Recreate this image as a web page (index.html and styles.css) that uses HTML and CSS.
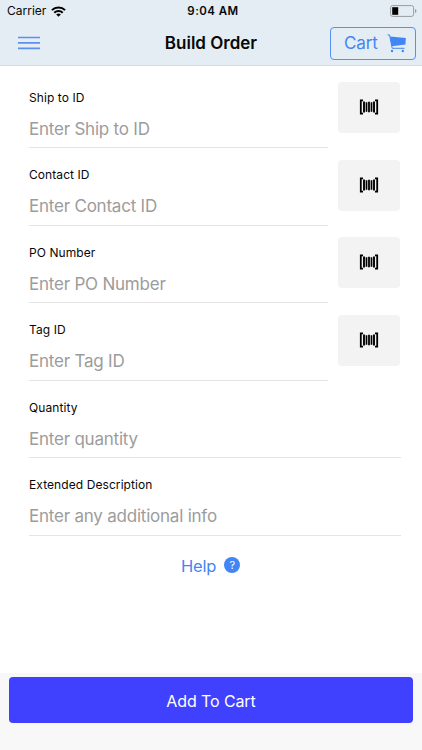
FILE: index.html
```html
<!DOCTYPE html>
<html lang="en">
<head>
<meta charset="utf-8">
<title>Build Order</title>
<link rel="stylesheet" href="styles.css">
</head>
<body>
<svg class="defs" width="0" height="0">
  <symbol id="barcode" viewBox="0 0 20 16">
    <path d="M4 1.300H1.800v13.400H4M16 1.300h2.200v13.400H16" fill="none" stroke="#000" stroke-width="1.800"/>
    <path d="M5 2.500v11M15 2.500v11" stroke="#000" stroke-width="1.900"/>
    <path d="M7.500 3.300v9.400M12.500 3.300v9.400" stroke="#000" stroke-width="1.700"/>
    <path d="M10 2.700v10.600" stroke="#000" stroke-width="1.800"/>
  </symbol>
</svg>
<header class="header">
  <div class="status">
    <div class="carrier"><span>Carrier</span>
      <svg width="15" height="11" viewBox="0 0 15 11"><g fill="none" stroke="#000" stroke-width="2"><path d="M.9 4.100a9.400 9.400 0 0 1 13.200 0"/><path d="M3.300 6.700a6 6 0 0 1 8.400 0"/></g><path d="M7.500 10.800 5.200 8.500a3.300 3.300 0 0 1 4.600 0z"/></svg>
    </div>
    <span class="time">9:04 AM</span>
    <svg class="battery" width="27" height="12" viewBox="0 0 27 12"><rect x=".6" y=".6" width="23" height="10.800" rx="2" fill="none" stroke="#999c9f"/><rect x="2.200" y="2.200" width="6" height="7.600" fill="#000"/><path d="M25 4q1.500.5 1.500 2T25 8z" fill="#999c9f"/></svg>
  </div>
  <div class="nav">
    <svg class="menu" width="22" height="14" viewBox="0 0 22 14"><path d="M0 1.500h22M0 6.900h22M0 12.300h22" stroke="#5c90ee" stroke-width="1.700"/></svg>
    <h1>Build Order</h1>
    <div class="cart"><span>Cart</span>
      <svg width="20" height="19" viewBox="0 0 20 19"><path d="M.5.900h2L5.200 14.300h12.300" fill="none" stroke="#4285f4" stroke-width="1"/><path d="M2.900 2.400 18.800 4l-.4 6.600-13.700 1.700z" fill="#4285f4"/><circle cx="5" cy="17" r="1.200" fill="#4285f4"/><circle cx="15.800" cy="17" r="1.200" fill="#4285f4"/></svg>
    </div>
  </div>
</header>
<main class="form">
  <div class="row"><div class="field"><label>Ship to ID</label><p>Enter Ship to ID</p></div><div class="scan"><svg width="20" height="16"><use href="#barcode"/></svg></div></div>
  <div class="row"><div class="field"><label>Contact ID</label><p>Enter Contact ID</p></div><div class="scan"><svg width="20" height="16"><use href="#barcode"/></svg></div></div>
  <div class="row"><div class="field"><label>PO Number</label><p>Enter PO Number</p></div><div class="scan"><svg width="20" height="16"><use href="#barcode"/></svg></div></div>
  <div class="row"><div class="field"><label>Tag ID</label><p>Enter Tag ID</p></div><div class="scan"><svg width="20" height="16"><use href="#barcode"/></svg></div></div>
  <div class="row"><div class="field wide"><label>Quantity</label><p>Enter quantity</p></div></div>
  <div class="row"><div class="field wide"><label>Extended Description</label><p>Enter any additional info</p></div></div>
  <div class="help"><span>Help</span><span class="mark">?</span></div>
</main>
<footer class="footer"><div class="add">Add To Cart</div></footer>
</body>
</html>
```
FILE: styles.css
```css
* { box-sizing: border-box; }
body { margin: 0; width: 422px; height: 750px; display: flex; flex-direction: column; overflow: hidden; background: #fff; color: #080808; font-family: Inter, "Liberation Sans", sans-serif; }
h1, p { margin: 0; font: inherit; }
svg { display: block; flex: none; }
.defs { position: absolute; }
.header { flex: none; height: 66px; background: #e4ecf4; border-bottom: 1px solid #d6d8da; }
.status { height: 21px; padding: 0 5px 0 7px; display: grid; grid-template-columns: 1fr auto 1fr; align-items: center; font-size: 12px; line-height: 22px; }
.carrier { display: flex; align-items: center; gap: 5px; }
.time { font-weight: 600; font-size: 11.5px; letter-spacing: .45px; margin-left: 2px; }
.battery { justify-self: end; }
.nav { height: 43px; padding: 0 6px 0 18px; display: grid; grid-template-columns: 1fr auto 1fr; align-items: center; }
.nav h1 { font-size: 17px; font-weight: 600; letter-spacing: 0; line-height: 42px; margin-right: 12px; }
.cart { justify-self: end; width: 86px; height: 33px; margin-top: 1px; border: 1px solid #5790f4; border-radius: 4px; display: flex; align-items: center; padding-left: 13px; gap: 9px; color: #4285f4; font-size: 17px; letter-spacing: -.1px; }
.cart span { line-height: 31px; margin-top: 1px; }
.form { flex: 1; padding: 16px 21px 0 29px; }
.row { height: 77.5px; display: flex; justify-content: space-between; }
.field { width: 299px; height: 66px; padding-top: 6.500px; border-bottom: 1px solid #e4e4e4; }
.wide { width: 372px; }
.field label { display: block; font-size: 12px; line-height: 17px; letter-spacing: .08px; }
.field p { margin-top: 12px; font-size: 17px; line-height: 22px; letter-spacing: -.22px; color: #9c9c9c; white-space: nowrap; }
.scan { width: 62px; height: 51px; border-radius: 4px; background: #f3f3f3; display: flex; align-items: center; justify-content: center; margin-right: 1px; padding-bottom: 1px; }
.help { display: flex; align-items: center; gap: 8px; height: 24px; margin-top: 6.500px; padding-left: 152px; font-size: 16.500px; letter-spacing: -.2px; color: #4285f4; }
.mark { width: 16px; height: 16px; border-radius: 50%; background: #4285f4; color: #fff; font-size: 11px; line-height: 16px; text-align: center; margin-top: -1px; }
.footer { flex: none; height: 77px; background: #f8f8f8; padding: 4px 9px; }
.add { height: 46px; border-radius: 4px; background: #4040ff; color: #fff; text-align: center; font-size: 16px; line-height: 48px; letter-spacing: -.1px; }
```
